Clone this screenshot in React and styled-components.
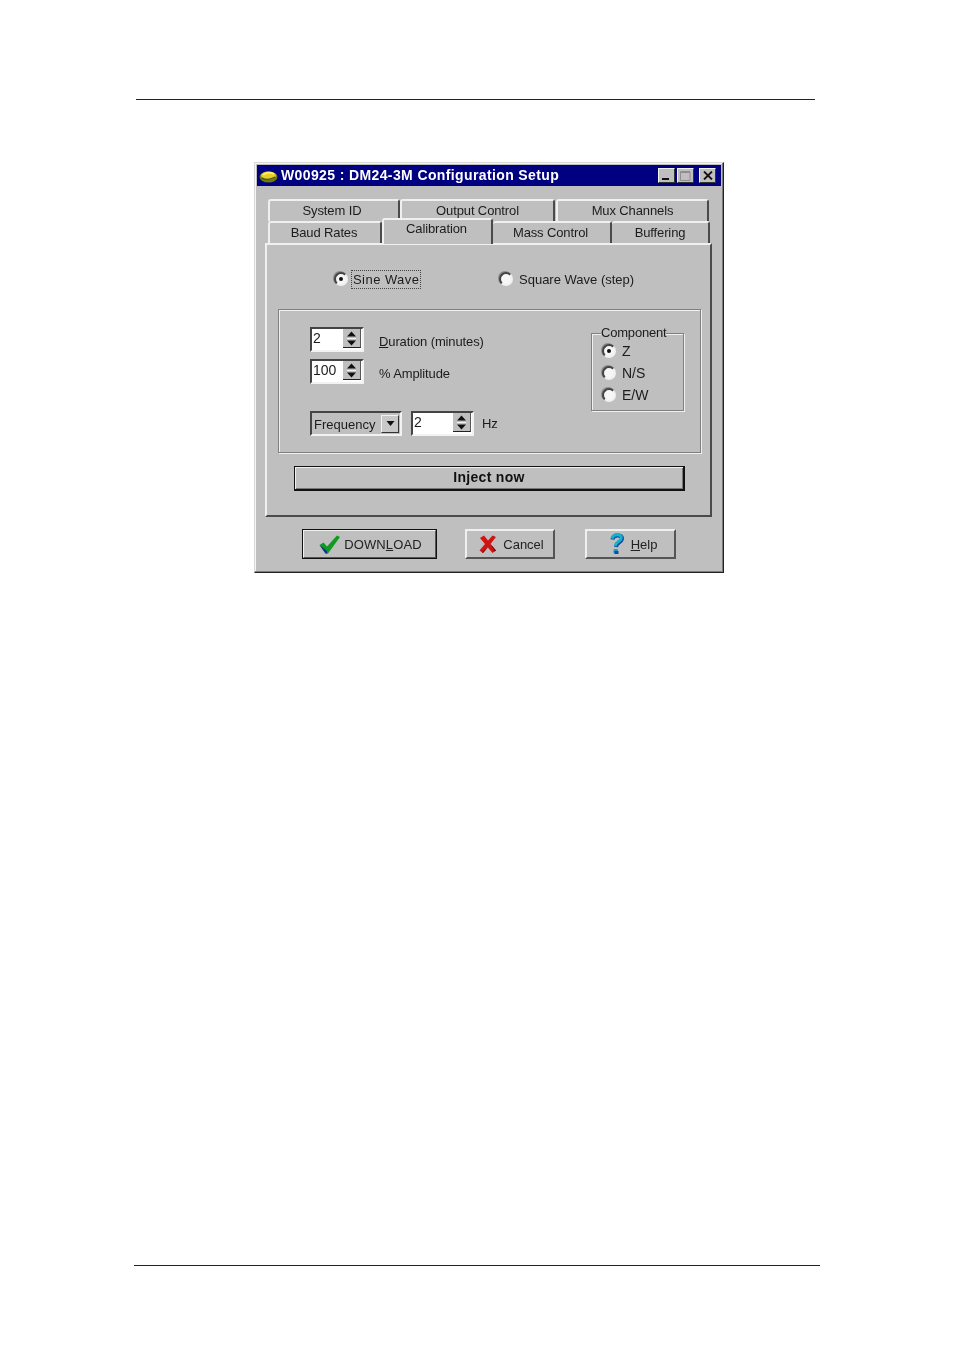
import React from 'react'
import styled, { createGlobalStyle } from 'styled-components'

const GlobalStyle = createGlobalStyle`
  html, body {
    margin: 0;
    padding: 0;
    background: #fff;
  }
`

const Page = styled.div`
  width: 954px;
  height: 1351px;
  display: flex;
  flex-direction: column;
  background: #fff;
  font-family: "Liberation Sans", Arial, sans-serif;
  color: #1c1c1c;
`

const TopRule = styled.div`
  height: 1px;
  width: 679px;
  margin: 99px 0 0 136px;
  background: #222;
`

const BottomRule = styled.div`
  height: 1px;
  width: 686px;
  margin: auto 0 85px 134px;
  background: #222;
`

const Dialog = styled.div`
  box-sizing: border-box;
  width: 470px;
  height: 411px;
  margin: 62px 0 0 254px;
  padding: 2px;
  background: #bfbfbf;
  border-top: 1px solid #d8d8d8;
  border-left: 1px solid #d8d8d8;
  border-right: 1px solid #222;
  border-bottom: 1px solid #222;
  box-shadow: inset -1px -1px 0 #7c7c7c, inset 1px 1px 0 #f4f4f4;
  filter: blur(0.35px);
`

const TitleBar = styled.div`
  height: 21px;
  display: flex;
  align-items: center;
  padding: 0 5px 0 2px;
  background: #000080;
`

const TitleText = styled.span`
  margin: 0 0 2px 3px;
  color: #fff;
  font-size: 14px;
  font-weight: 700;
  letter-spacing: 0.38px;
  white-space: nowrap;
`

const WindowButtons = styled.div`
  margin-left: auto;
  display: flex;
  align-items: center;
`

const WindowButton = styled.div`
  box-sizing: border-box;
  width: 17px;
  height: 15px;
  margin-left: ${(p) => p.$gap}px;
  display: flex;
  align-items: center;
  justify-content: center;
  background: #bfbfbf;
  border-top: 1px solid #f2f2f2;
  border-left: 1px solid #f2f2f2;
  border-right: 1px solid #333;
  border-bottom: 1px solid #333;
`

const TabArea = styled.div`
  margin: 13px 10px 0 8px;
`

const TabRow = styled.div`
  display: flex;
  height: 22px;
  padding-left: 3px;
  align-items: flex-end;
`

const Tab = styled.div`
  box-sizing: border-box;
  position: relative;
  width: ${(p) => p.$width}px;
  margin-right: ${(p) => p.$gap || 0}px;
  height: ${(p) => (p.$active ? 26 : 22)}px;
  display: flex;
  align-items: ${(p) => (p.$active ? 'flex-start' : 'center')};
  justify-content: center;
  padding: ${(p) => (p.$active ? 1 : 0)}px ${(p) => p.$pad || 0}px ${(p) => (p.$active ? 0 : 2)}px 0;
  font-size: 13px;
  letter-spacing: -0.12px;
  background: #bfbfbf;
  border-top: 2px solid #f0f0f0;
  border-left: ${(p) => (p.$active || p.$plain ? 2 : 0)}px solid #f0f0f0;
  border-right: 2px solid #4a4a4a;
  border-radius: 3px 3px 0 0;
  z-index: ${(p) => (p.$active ? 2 : 1)};
  margin-bottom: ${(p) => (p.$active ? -1 : 0)}px;
  white-space: nowrap;
`

const TabPanel = styled.div`
  box-sizing: border-box;
  width: 447px;
  height: 274px;
  padding: 0 10px 0 11px;
  border-top: 2px solid #f0f0f0;
  border-left: 2px solid #f0f0f0;
  border-right: 2px solid #4a4a4a;
  border-bottom: 2px solid #4a4a4a;
`

const ModeRow = styled.div`
  height: 64px;
  display: flex;
  align-items: center;
  padding: 4px 0 0 56px;
  box-sizing: border-box;
`

const RadioOption = styled.label`
  display: flex;
  align-items: center;
  width: ${(p) => p.$width || 'auto'};
  height: ${(p) => p.$height || 'auto'};
  font-size: ${(p) => p.$size || 13}px;
`

const RadioDot = styled.span`
  box-sizing: border-box;
  flex: none;
  width: 14px;
  height: 14px;
  margin-right: ${(p) => p.$gap}px;
  display: flex;
  align-items: center;
  justify-content: center;
  border-radius: 50%;
  background: #f6f6f6;
  border: 2px solid;
  border-color: #444 #f0f0f0 #f0f0f0 #444;
  box-shadow: -1px -1px 0 #8a8a8a;
  &::after {
    content: '';
    width: 4px;
    height: 4px;
    border-radius: 50%;
    background: ${(p) => (p.$checked ? '#111' : 'transparent')};
  }
`

const FocusLabel = styled.span`
  outline: 1px dotted #444;
  outline-offset: 1px;
  letter-spacing: 0.45px;
`

const GroupBox = styled.div`
  box-sizing: border-box;
  width: 423px;
  height: 144px;
  padding: 17px 16px 0 31px;
  display: flex;
  justify-content: space-between;
  border: 1px solid #808080;
  box-shadow: 1px 1px 0 #f0f0f0, inset 1px 1px 0 #f0f0f0;
`

const LeftColumn = styled.div`
  display: flex;
  flex-direction: column;
`

const FieldRow = styled.div`
  display: flex;
  align-items: center;
  height: 25px;
  margin-bottom: 7px;
`

const FreqRow = styled.div`
  display: flex;
  align-items: center;
  height: 25px;
  margin-top: 20px;
`

const Spin = styled.div`
  box-sizing: border-box;
  width: ${(p) => p.$width}px;
  height: 25px;
  display: flex;
  justify-content: space-between;
  padding: 0 2px 2px 1px;
  background: #fff;
  border-top: 2px solid #444;
  border-left: 2px solid #444;
  border-right: 2px solid #f2f2f2;
  border-bottom: 2px solid #f2f2f2;
  font-size: 14px;
  line-height: 19px;
`

const SpinButtons = styled.div`
  width: 17px;
  margin-right: -1px;
  display: flex;
  align-items: center;
  justify-content: center;
  background: #bfbfbf;
  border-right: 1px solid #555;
  border-bottom: 1px solid #222;
`

const FieldLabel = styled.span`
  margin-left: ${(p) => p.$gap}px;
  padding-top: ${(p) => p.$top || 0}px;
  font-size: 13px;
  letter-spacing: -0.12px;
  white-space: nowrap;
`

const Mnemonic = styled.span`
  text-decoration: underline;
`

const Combo = styled.div`
  box-sizing: border-box;
  width: 92px;
  height: 25px;
  margin-right: 9px;
  display: flex;
  align-items: center;
  justify-content: space-between;
  padding: 0 1px 0 2px;
  background: #bfbfbf;
  border-top: 2px solid #444;
  border-left: 2px solid #444;
  border-right: 2px solid #f2f2f2;
  border-bottom: 2px solid #f2f2f2;
  font-size: 13px;
`

const ComboText = styled.span`
  padding-top: 2px;
`

const ComboButton = styled.div`
  box-sizing: border-box;
  width: 18px;
  height: 18px;
  display: flex;
  align-items: center;
  justify-content: center;
  background: #c8c8c8;
  border-top: 1px solid #f2f2f2;
  border-left: 1px solid #f2f2f2;
  border-right: 1px solid #333;
  border-bottom: 1px solid #333;
`

const Fieldset = styled.fieldset`
  box-sizing: border-box;
  width: 93px;
  height: 85px;
  margin: -1px 0 0 0;
  padding: 0 0 0 10px;
  border: 1px solid #808080;
  box-shadow: 1px 1px 0 #f0f0f0, inset 1px 1px 0 #f0f0f0;
  display: flex;
  flex-direction: column;
`

const Legend = styled.legend`
  padding: 0;
  margin-left: -1px;
  font-size: 13px;
  letter-spacing: -0.2px;
  line-height: 14px;
  background: #bfbfbf;
`

const InjectButton = styled.button`
  display: block;
  box-sizing: border-box;
  width: 391px;
  height: 25px;
  margin: 13px 0 0 16px;
  padding: 0 0 2px 0;
  font-family: inherit;
  font-size: 14px;
  font-weight: 700;
  letter-spacing: 0.3px;
  color: #111;
  background: #bfbfbf;
  border: 1px solid #111;
  border-right-width: 2px;
  border-bottom-width: 2px;
  box-shadow: inset 1px 1px 0 #f0f0f0, inset -1px -1px 0 #777;
`

const Footer = styled.div`
  display: flex;
  padding: 12px 0 0 45px;
`

const FooterButton = styled.button`
  box-sizing: border-box;
  width: ${(p) => p.$width}px;
  height: 30px;
  margin-right: ${(p) => p.$gap}px;
  display: flex;
  align-items: center;
  justify-content: center;
  gap: ${(p) => p.$iconGap}px;
  padding: 0 0 0 ${(p) => p.$shift}px;
  font-family: inherit;
  font-size: 13px;
  color: #222;
  background: #bfbfbf;
  border-top: 2px solid #f0f0f0;
  border-left: 2px solid #f0f0f0;
  border-right: 2px solid #555;
  border-bottom: 2px solid #555;
  ${(p) => p.$primary && 'outline: 1px solid #111; outline-offset: -1px; letter-spacing: 0.1px;'}
`

const SpinArrows = () => (
  <svg width="11" height="15" viewBox="0 0 11 15">
    <path d="M5.5 0.5 L10 5.5 H1 Z M1 9.5 H10 L5.5 14.5 Z" fill="#111" />
    <rect x="1" y="7" width="9" height="1" fill="#f4f4f4" />
  </svg>
)

const TitleIcon = () => (
  <svg width="19" height="16" viewBox="0 0 19 16">
    <ellipse cx="9.5" cy="9" rx="9" ry="5.5" fill="#6d7a14" />
    <ellipse cx="9.5" cy="7.5" rx="7.5" ry="4" fill="#e3cf27" />
    <path d="M4 7 Q9 3 15 6" stroke="#fff27a" strokeWidth="1.5" fill="none" />
    <path d="M3 10 Q9 13 16 9" stroke="#3c4a10" strokeWidth="1.2" fill="none" />
  </svg>
)

const CheckIcon = () => (
  <svg width="22" height="19" viewBox="0 0 22 19">
    <path d="M0.5 10 L4.5 7.5 L8 11.5 L18 0.5 L21 2 L9 18.5 H6.5 Z" fill="#0f9a22" />
    <path d="M0.5 10 L6.5 18.5 H8.5 L7.5 15.5 Z" fill="#1c2f9c" />
  </svg>
)

const CrossIcon = () => (
  <svg width="18" height="18" viewBox="0 0 18 18">
    <path d="M1 3 L5 0.5 L9 5.5 L13.5 0.5 L17 2 L11.5 9 L17 15.5 L13.5 18 L8.8 12.5 L4 18 L0.5 15.5 L6 9 Z" fill="#d01414" />
    <path d="M8.8 12.5 L4 18 L3 17.3 Z M11.5 9 L17 15.5 L15.6 16.5 Z" fill="#6c0c0c" />
  </svg>
)

const HelpIcon = () => (
  <svg width="16" height="22" viewBox="0 0 16 22">
    <path d="M3.5 6.5 Q4 2.5 8.5 2.5 Q13.5 2.5 13 6 Q12.5 8 10 9.5 Q7.5 11 7 14" stroke="#1646a8" strokeWidth="4" fill="none" />
    <path d="M3 5.5 Q4 1.8 8.2 1.8 Q12.6 1.8 12.2 5.4 Q11.7 7.4 9.2 8.8 Q6.8 10.3 6.3 13" stroke="#12b4cc" strokeWidth="3" fill="none" />
    <rect x="4.5" y="16" width="4.5" height="4.5" rx="1" fill="#12a4c4" />
    <rect x="5.5" y="18" width="4" height="3" rx="0.5" fill="#1646a8" />
  </svg>
)

const topTabs = [
  { label: 'System ID', width: 132, gap: 0, pad: 4 },
  { label: 'Output Control', width: 155, gap: 1 },
  { label: 'Mux Channels', width: 153 },
]

const bottomTabs = [
  { label: 'Baud Rates', width: 114, pad: 2 },
  { label: 'Calibration', width: 111, active: true, pad: 2 },
  { label: 'Mass Control', width: 119, pad: 2 },
  { label: 'Buffering', width: 98 },
]

export default function App() {
  return (
    <Page>
      <GlobalStyle />
      <TopRule />
      <Dialog>
        <TitleBar>
          <TitleIcon />
          <TitleText>W00925 : DM24-3M Configuration Setup</TitleText>
          <WindowButtons>
            <WindowButton $gap={0}>
              <svg width="9" height="9" viewBox="0 0 9 9"><rect x="0" y="7" width="7" height="2" fill="#111" /></svg>
            </WindowButton>
            <WindowButton $gap={2}>
              <svg width="11" height="10" viewBox="0 0 11 10"><path d="M0.5 0.5 H10 V9.5 H0.5 Z M0.5 1.5 H10" stroke="#8e8e8e" fill="none" /></svg>
            </WindowButton>
            <WindowButton $gap={5}>
              <svg width="10" height="9" viewBox="0 0 10 9"><path d="M1 0.5 L9 8.5 M9 0.5 L1 8.5" stroke="#111" strokeWidth="1.8" /></svg>
            </WindowButton>
          </WindowButtons>
        </TitleBar>

        <TabArea>
          <TabRow>
            {topTabs.map((t) => (
              <Tab key={t.label} $width={t.width} $gap={t.gap} $pad={t.pad} $plain>{t.label}</Tab>
            ))}
          </TabRow>
          <TabRow>
            {bottomTabs.map((t) => (
              <Tab key={t.label} $width={t.width} $active={t.active} $pad={t.pad} $plain={t.label === 'Baud Rates'}>{t.label}</Tab>
            ))}
          </TabRow>
          <TabPanel>
            <ModeRow>
              <RadioOption $width="165px">
                <RadioDot $checked $gap={5} />
                <FocusLabel>Sine Wave</FocusLabel>
              </RadioOption>
              <RadioOption>
                <RadioDot $gap={6} />
                Square Wave (step)
              </RadioOption>
            </ModeRow>

            <GroupBox>
              <LeftColumn>
                <FieldRow>
                  <Spin $width={54}>2<SpinButtons><SpinArrows /></SpinButtons></Spin>
                  <FieldLabel $gap={15} $top={4}><Mnemonic>D</Mnemonic>uration (minutes)</FieldLabel>
                </FieldRow>
                <FieldRow>
                  <Spin $width={54}>100<SpinButtons><SpinArrows /></SpinButtons></Spin>
                  <FieldLabel $gap={15} $top={4}>% Amplitude</FieldLabel>
                </FieldRow>
                <FreqRow>
                  <Combo>
                    <ComboText>Frequency</ComboText>
                    <ComboButton>
                      <svg width="9" height="5" viewBox="0 0 9 5"><path d="M0.5 0 H8.5 L4.5 5 Z" fill="#111" /></svg>
                    </ComboButton>
                  </Combo>
                  <Spin $width={63}>2<SpinButtons><SpinArrows /></SpinButtons></Spin>
                  <FieldLabel $gap={8}>Hz</FieldLabel>
                </FreqRow>
              </LeftColumn>

              <Fieldset>
                <Legend>Component</Legend>
                <RadioOption $height="22px" $size={14}><RadioDot $checked $gap={6} />Z</RadioOption>
                <RadioOption $height="22px" $size={14}><RadioDot $gap={6} />N/S</RadioOption>
                <RadioOption $height="22px" $size={14}><RadioDot $gap={6} />E/W</RadioOption>
              </Fieldset>
            </GroupBox>

            <InjectButton>Inject now</InjectButton>
          </TabPanel>
        </TabArea>

        <Footer>
          <FooterButton $primary $width={135} $gap={28} $iconGap={3} $shift={2}>
            <CheckIcon />
            <span>DOWN<Mnemonic>L</Mnemonic>OAD</span>
          </FooterButton>
          <FooterButton $width={90} $gap={30} $iconGap={6} $shift={3}>
            <CrossIcon />
            Cancel
          </FooterButton>
          <FooterButton $width={91} $gap={0} $iconGap={6} $shift={5}>
            <HelpIcon />
            <span><Mnemonic>H</Mnemonic>elp</span>
          </FooterButton>
        </Footer>
      </Dialog>
      <BottomRule />
    </Page>
  )
}
